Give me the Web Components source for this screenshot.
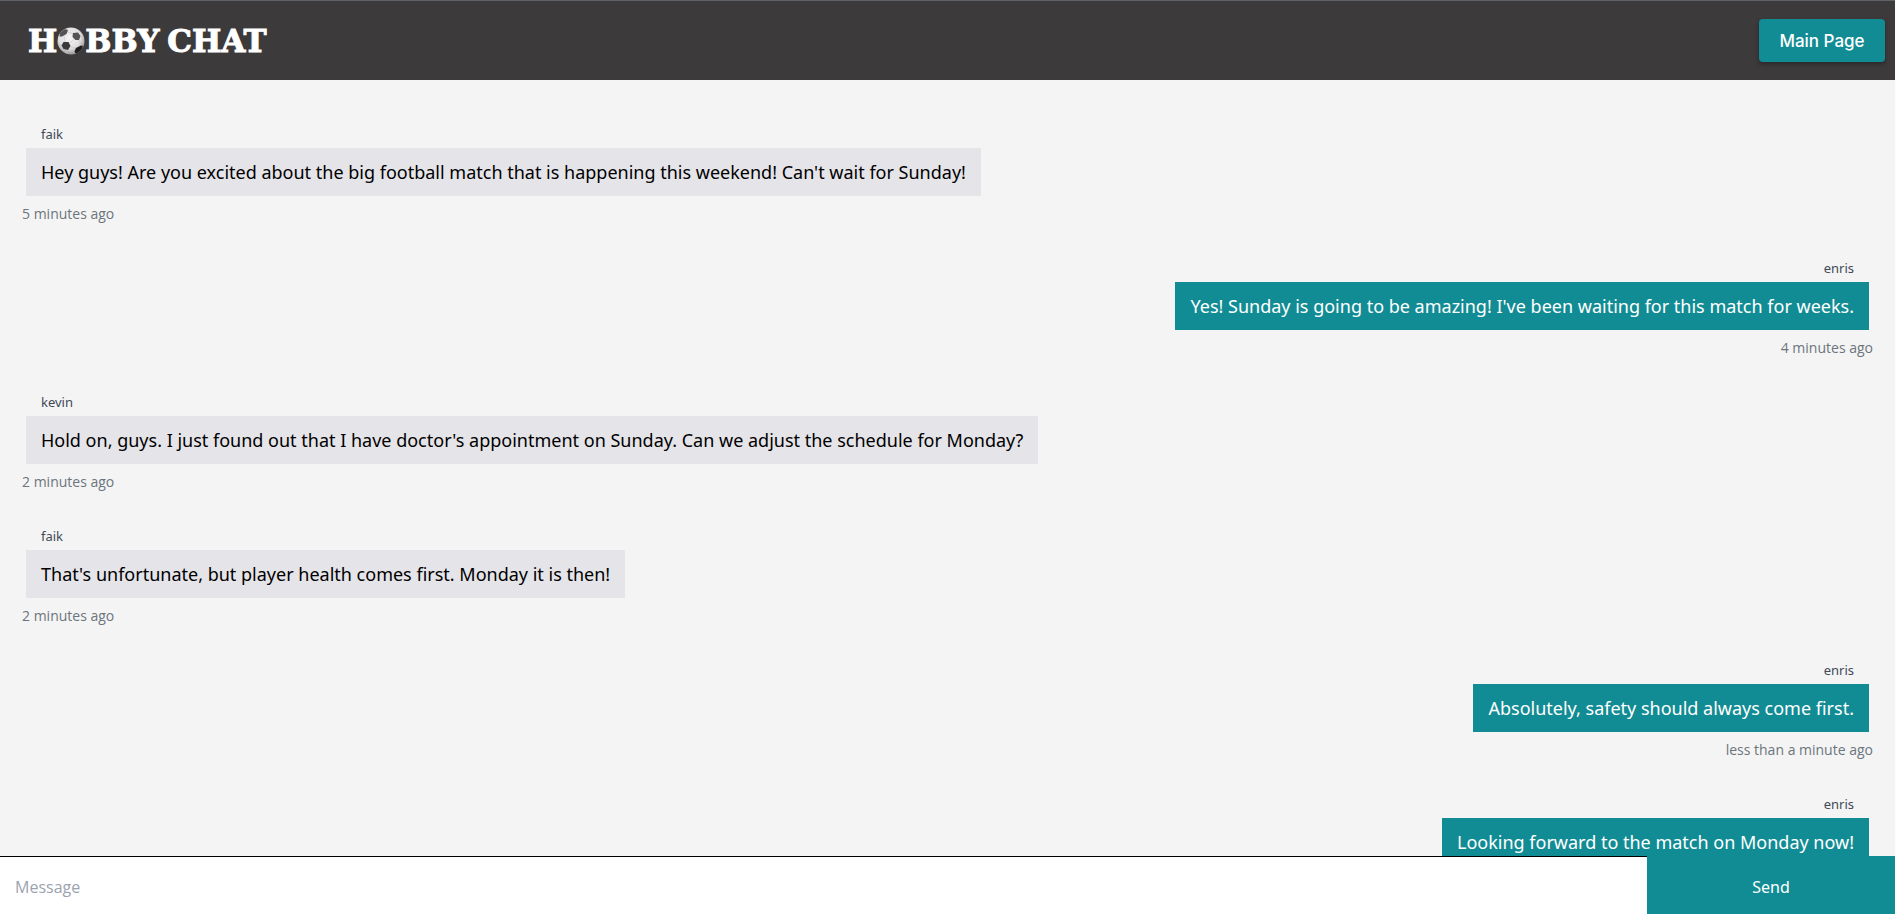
<!DOCTYPE html>
<html lang="en">
<head>
<meta charset="utf-8">
<title>Hobby Chat</title>
<style>
  html, body { margin: 0; height: 100%; }
  body {
    background: #fff;
    font-family: "Noto Sans", "Open Sans", sans-serif;
    --teal: #128c94;
    --header: #3d3a3b;
    --canvas: #f4f4f4;
  }
</style>
</head>
<body>
<chat-app>
  <chat-header slot="header"></chat-header>
  <chat-message author="faik" time="5 minutes ago">Hey guys! Are you excited about the big football match that is happening this weekend! Can't wait for Sunday!</chat-message>
  <chat-message own author="enris" time="4 minutes ago">Yes! Sunday is going to be amazing! I've been waiting for this match for weeks.</chat-message>
  <chat-message author="kevin" time="2 minutes ago">Hold on, guys. I just found out that I have doctor's appointment on Sunday. Can we adjust the schedule for Monday?</chat-message>
  <chat-message author="faik" time="2 minutes ago">That's unfortunate, but player health comes first. Monday it is then!</chat-message>
  <chat-message own author="enris" time="less than a minute ago">Absolutely, safety should always come first.</chat-message>
  <chat-message own author="enris">Looking forward to the match on Monday now!</chat-message>
  <chat-composer slot="composer"></chat-composer>
</chat-app>

<script>
  const define = (name, html, setup) => {
    const template = document.createElement('template');
    template.innerHTML = html;
    customElements.define(name, class extends HTMLElement {
      constructor() {
        super();
        this.attachShadow({ mode: 'open' }).append(template.content.cloneNode(true));
      }
      connectedCallback() { if (setup) setup(this, this.shadowRoot); }
    });
  };

  define('chat-app', `
    <style>
      :host { display: flex; flex-direction: column; height: 100vh; box-sizing: border-box; border-right: 1px solid #fdfdfd; }
      main {
        flex: 1; min-height: 0; overflow-y: auto; scrollbar-width: none;
        box-sizing: border-box; padding: 44px 22px 0; background: var(--canvas);
        display: flex; flex-direction: column; gap: 34px;
      }
    </style>
    <slot name="header"></slot>
    <main><slot></slot></main>
    <slot name="composer"></slot>
  `);

  define('hobby-logo', `
    <style>
      :host { display: flex; align-items: center; color: #fff; font: bold 31px/36px "DejaVu Serif", serif; -webkit-text-stroke: 1px #fff; }
      svg { width: 28px; height: 28px; }
      .chat { margin-left: 8px; }
    </style>
    <span>H</span>
    <svg viewBox="0 0 28 28" aria-hidden="true">
      <defs>
        <radialGradient id="shade" cx="45%" cy="38%" r="62%">
          <stop offset="0" stop-color="#f5f3f4"/>
          <stop offset=".65" stop-color="#e0dedf"/>
          <stop offset="1" stop-color="#999798"/>
        </radialGradient>
        <clipPath id="ball"><circle cx="14" cy="14" r="13.500"/></clipPath>
      </defs>
      <circle cx="14" cy="14" r="13.500" fill="url(#shade)"/>
      <g clip-path="url(#ball)">
        <path d="M11 5l6 2M7 9l1 6M13 16l4-4M22 13l2 5M14 20l5 1M8 23l2 4M5 18l-5-2" stroke="#c6c4c5" stroke-width=".6" fill="none"/>
        <path d="M3 5.500L8 2L11 3L9.500 7L5 9.500L2.500 9.500Z" fill="#555354"/>
        <path d="M16 6L21 5.500L23.500 9L22 13L18.500 13L15.500 10Z" fill="#555354"/>
        <path d="M6.500 15L11.500 15L13.500 19L11 23L6.500 22L4.500 18.500Z" fill="#3a3839"/>
        <path d="M19 21L24 18.500L26 19L24 25L19 27L17.500 24.500Z" fill="#201e1f"/>
      </g>
    </svg>
    <span>BBY</span><span class="chat">CHAT</span>
  `);

  define('chat-header', `
    <style>
      :host { display: block; }
      header {
        display: flex; align-items: center; justify-content: space-between;
        height: 80px; box-sizing: border-box; padding: 0 10px 0 28px;
        background: var(--header); border-top: 1px solid #5f6368;
      }
      button {
        min-width: 126px; height: 43px; padding: 0 16px; border: 0; border-radius: 4px;
        background: var(--teal); color: #fff; font: 500 17px/24px Inter, sans-serif;
        box-shadow: 0 2px 4px rgba(0, 0, 0, .35); cursor: pointer;
      }
    </style>
    <header>
      <hobby-logo></hobby-logo>
      <button type="button">Main Page</button>
    </header>
  `);

  define('chat-message', `
    <style>
      :host { display: flex; flex-direction: column; align-items: flex-start; }
      :host([own]) { align-items: flex-end; }
      .author { margin: 0 19px 4px; font-size: 13px; line-height: 20px; color: #414958; }
      .bubble { margin: 0 4px; padding: 12px 15px; font-size: 18px; line-height: 24px; background: #e5e4e9; color: #000; }
      :host([own]) .bubble { background: var(--teal); color: #fff; }
      time { margin-top: 8px; font: 14px/20px "Open Sans", sans-serif; color: #6c757d; }
    </style>
    <div class="author"></div>
    <div class="bubble"><slot></slot></div>
    <time></time>
  `, (host, root) => {
    root.querySelector('.author').textContent = host.getAttribute('author');
    const time = root.querySelector('time');
    time.textContent = host.getAttribute('time') || '';
    time.hidden = !host.hasAttribute('time');
  });

  define('chat-composer', `
    <style>
      :host { display: block; }
      form { display: flex; height: 58px; }
      input {
        flex: 1; min-width: 0; box-sizing: border-box; padding: 2px 15px 0; border: 0; border-top: 1px solid #000;
        border-radius: 0; outline: 0; background: #fff; color: #000; font: 16px/24px "Open Sans", sans-serif;
      }
      input::placeholder { color: #9ca3af; opacity: 1; }
      button { width: 248px; padding: 4px 0 0; border: 0; background: var(--teal); color: #fff; font: 16px/24px "Noto Sans", sans-serif; cursor: pointer; }
    </style>
    <form>
      <input type="text" placeholder="Message" aria-label="Message">
      <button type="button">Send</button>
    </form>
  `);
</script>
</body>
</html>
